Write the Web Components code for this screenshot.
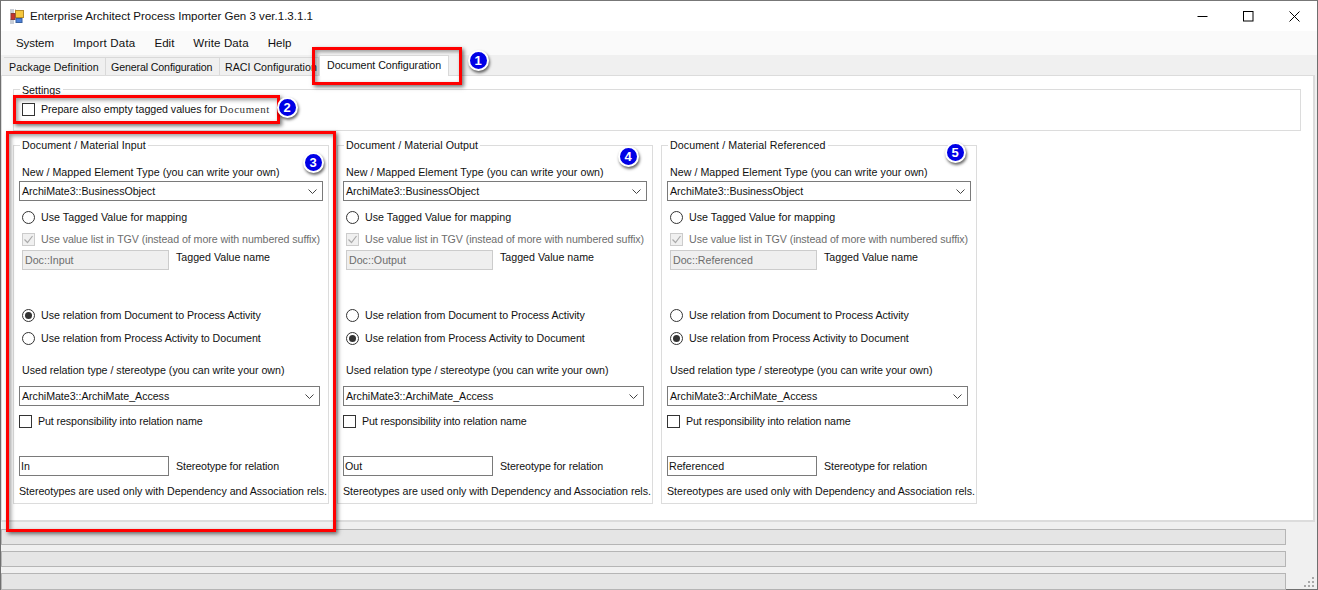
<!DOCTYPE html>
<html><head><meta charset="utf-8"><style>
html,body{margin:0;padding:0;width:1318px;height:590px;overflow:hidden;background:#f0f0f0}
body{font:10.67px/13px "Liberation Sans",Arial,sans-serif;color:#111}
</style></head><body>
<ea-app>
 <ea-titlebar slot="title">Enterprise Architect Process Importer Gen 3 ver.1.3.1.1</ea-titlebar>
 <ea-menubar slot="menu"></ea-menubar>
 <ea-tabs slot="tabs"></ea-tabs>
 <ea-settings slot="panel"></ea-settings>
 <ea-group slot="groups" heading="Document / Material Input" tgv="Doc::Input" dir="a" stereo="In" style="margin-left:11px"></ea-group>
 <ea-group slot="groups" heading="Document / Material Output" tgv="Doc::Output" dir="b" stereo="Out" style="margin-left:8px"></ea-group>
 <ea-group slot="groups" heading="Document / Material Referenced" tgv="Doc::Referenced" dir="b" stereo="Referenced" style="margin-left:8px"></ea-group>
 <ea-progress slot="status"></ea-progress>
 <ea-mark slot="over" x="312" y="47" w="150" h="38"></ea-mark>
 <ea-mark slot="over" x="13" y="95" w="267" h="29"></ea-mark>
 <ea-mark slot="over" x="6" y="131" w="330" h="401"></ea-mark>
 <ea-badge slot="over" x="478" y="60">1</ea-badge>
 <ea-badge slot="over" x="287" y="107">2</ea-badge>
 <ea-badge slot="over" x="313" y="162">3</ea-badge>
 <ea-badge slot="over" x="628" y="156">4</ea-badge>
 <ea-badge slot="over" x="955" y="152">5</ea-badge>
</ea-app>
<script>
function def(name,css,html,init){
  customElements.define(name,class extends HTMLElement{
    constructor(){super();this.attachShadow({mode:'open'});}
    connectedCallback(){
      const a=n=>this.getAttribute(n)||'';
      this.shadowRoot.innerHTML='<style>'+css+'</style>'+(typeof html==='function'?html(a):html);
      if(init)init(this,a);
    }
  });
}
def('ea-app',`
:host{display:flex;flex-direction:column;width:1318px;height:590px;box-sizing:border-box;border:1px solid #6f6f6f;border-top-color:#777;position:relative;background:#f0f0f0}
.panel{flex:none;height:447px;margin:0 2px 0 0;background:#fff;border:1px solid #dcdcdc;border-width:1px 2px 2px 1px;box-sizing:border-box;display:flex;flex-direction:column}
.row{display:flex;margin-top:14px}
`,`<slot name="title"></slot><slot name="menu"></slot><slot name="tabs"></slot>
<div class="panel"><slot name="panel"></slot><div class="row"><slot name="groups"></slot></div></div>
<slot name="status"></slot><slot name="over"></slot>`);
def('ea-titlebar',`
:host{display:flex;align-items:center;height:30px;background:#fff;font-size:11.55px;color:#111;flex:none}
svg{margin-left:9px;margin-right:6px;flex:none}
.t{flex:1;white-space:nowrap}
.c{display:flex;align-items:center}
.c svg{margin:0;display:block}
.c span{width:46px;height:30px;display:flex;align-items:center;justify-content:center}
`,`<svg width="14" height="15" viewBox="0 0 14 15"><path d="M0 0h4v4H0zM0 10h4v5H0z" fill="#c9ced6"/><path d="M5 0h1v1H5z" fill="#c9ced6"/><rect x="5.5" y="1.5" width="8" height="7" fill="#f6c83e" stroke="#b58a28"/><rect x="1" y="4.5" width="4" height="6" fill="#c8322c" stroke="#8c3a36"/><rect x="6" y="9.5" width="6" height="4" fill="#4d80d8" stroke="#38619f"/></svg>
<span class="t"><slot></slot></span>
<div class="c"><span><svg width="11" height="11" viewBox="0 0 11 11"><path d="M0.5 5.5h10" stroke="#000" fill="none"/></svg></span><span><svg width="11" height="11" viewBox="0 0 11 11"><rect x=".5" y=".5" width="9.5" height="9.5" stroke="#000" fill="none"/></svg></span><span><svg width="11" height="11" viewBox="0 0 11 11"><path d="M.5.5l10 10M10.5.5l-10 10" stroke="#000" fill="none"/></svg></span></div>`);
def('ea-menubar',`
:host{display:flex;height:24px;background:#fafafa;flex:none;padding-left:8px;font-size:11.55px;align-items:center;color:#111}
span{padding:0 7px;margin-right:5px}
`,`<span style="letter-spacing:-.1px">System</span><span style="letter-spacing:.2px">Import Data</span><span>Edit</span><span style="letter-spacing:.1px">Write Data</span><span>Help</span>`);
def('ea-tabs',`
:host{display:flex;height:20px;flex:none;padding-left:3px;align-items:flex-end;position:relative;background:#f0f0f0;color:#111}
.t{height:18px;line-height:18px;padding:0 5px;border:1px solid #d9d9d9;border-bottom:0;border-left:0;box-sizing:border-box;background:#f0f0f0;white-space:nowrap;flex:none;overflow:hidden}
.s{background:#fff;height:21px;line-height:19px;margin-bottom:-1px;padding:0 7px;width:130px;border:1px solid #d9d9d9;border-bottom:0;position:relative;z-index:1}
`,`<div class="t" style="width:102px;letter-spacing:.05px">Package Definition</div><div class="t" style="width:114px;letter-spacing:-.14px">General Configuration</div><div class="t" style="width:99px">RACI Configuration</div><div class="t s" style="letter-spacing:-.04px">Document Configuration</div>`);
def('ea-settings',`
:host{display:block;margin:13px 13px 0 11px;height:42px;box-sizing:border-box;border:1px solid #dcdcdc;width:1288px}
.l{margin:-6px 0 0 6px;background:#fff;padding:0 2px;width:max-content;height:13px}
.r{display:flex;align-items:center;margin:4px 0 0 8px;height:16px}
.k{width:13px;height:13px;box-sizing:border-box;border:1px solid #333;background:#fff;margin-right:6px;flex:none}
.d{font-family:"Liberation Serif","Times New Roman",serif;font-size:11px;letter-spacing:.55px;color:#333}
`,`<div class="l">Settings</div><div class="r"><span class="k"></span><span style="letter-spacing:-.04px">Prepare also empty tagged values for&nbsp;<span class="d">Document</span></span></div>`);
const chev='<svg width="9" height="5" viewBox="0 0 9 5"><path d="M.5.5l4 4 4-4" fill="none" stroke="#444"/></svg>';
def('ea-group',`
:host{display:block;width:316px;height:359px;box-sizing:border-box;border:1px solid #dcdcdc;flex:none;background:#fff;color:#111;white-space:nowrap}
.l{margin:-7px 0 0 6px;background:#fff;padding:0 2px;width:max-content;height:13px;letter-spacing:.07px}
.line{display:flex;align-items:center;height:16px}
.combo{display:flex;align-items:center;justify-content:space-between;box-sizing:border-box;border:1px solid #7a7a7a;background:#fff;padding:0 5px 0 2px;margin-left:5px;letter-spacing:-.03px}
.radio{width:13px;height:13px;box-sizing:border-box;border:1px solid #333;border-radius:50%;background:#fff;flex:none;margin-right:6px;display:flex;align-items:center;justify-content:center}
.radio.on::after{content:"";width:7px;height:7px;border-radius:50%;background:#333}
.k{width:13px;height:13px;box-sizing:border-box;border:1px solid #333;background:#fff;flex:none;margin-right:6px;display:flex}
.k.dis{border-color:#ccc;background:#f0f0f0}
.p8{padding-left:8px}.p5{padding-left:5px}
.gray{color:#6d6d6d}
.in{box-sizing:border-box;border:1px solid #7a7a7a;background:#fff;padding:0 1px;display:flex;align-items:center;flex:none}
.in.dis{background:#efefef;border-color:#ccc;color:#6d6d6d;padding:0 2px}
`,a=>`<div class="l">${a('heading')}</div>
<div class="line p8" style="margin-top:12px;letter-spacing:.04px">New / Mapped Element Type (you can write your own)</div>
<div class="combo" style="margin-top:1px;width:304px;height:20px">ArchiMate3::BusinessObject ${chev}</div>
<div class="line p8" style="margin-top:8px;letter-spacing:.03px"><span class="radio"></span>Use Tagged Value for mapping</div>
<div class="line p8 gray" style="margin-top:6px;letter-spacing:-.07px"><span class="k dis"><svg width="11" height="11" viewBox="0 0 11 11"><path d="M1.5 5.5l3 3 5-6.5" fill="none" stroke="#aaa" stroke-width="1.2"/></svg></span>Use value list in TGV (instead of more with numbered suffix)</div>
<div class="line p8" style="margin-top:3px;height:20px;align-items:flex-start"><span class="in dis" style="width:147px;height:20px">${a('tgv')}</span><span style="margin-left:7px;margin-top:1px">Tagged Value name</span></div>
<div class="line p8" style="margin-top:37px;letter-spacing:-.05px"><span class="radio ${a('dir')=='a'?'on':''}"></span>Use relation from Document to Process Activity</div>
<div class="line p8" style="margin-top:7px;letter-spacing:-.05px"><span class="radio ${a('dir')=='b'?'on':''}"></span>Use relation from Process Activity to Document</div>
<div class="line p8" style="margin-top:16px;letter-spacing:-.02px">Used relation type / stereotype (you can write your own)</div>
<div class="combo" style="margin-top:8px;width:301px;height:20px">ArchiMate3::ArchiMate_Access ${chev}</div>
<div class="line p5" style="margin-top:7px;letter-spacing:-.1px"><span class="k"></span>Put responsibility into relation name</div>
<div class="line p5" style="margin-top:27px;height:20px"><span class="in" style="width:150px;height:20px">${a('stereo')}</span><span style="margin-left:7px;letter-spacing:-.08px">Stereotype for relation</span></div>
<div class="line p5" style="margin-top:7px;letter-spacing:-.02px">Stereotypes are used only with Dependency and Association rels.</div>`);
def('ea-progress',`
:host{display:flex;flex-direction:column;flex:1;position:relative;padding-top:7px;box-sizing:border-box}
.b{margin-left:0;width:1285px;height:16px;box-sizing:border-box;border:1px solid #b5b5b5;background:#e5e5e5;margin-bottom:6px}
.b:last-of-type{margin-bottom:0;height:17px}
svg{position:absolute;right:2px;bottom:1px}
`,`<div class="b"></div><div class="b"></div><div class="b"></div>
<svg width="12" height="12" viewBox="0 0 12 12" fill="#a8a8a8"><rect x="9" y="0" width="2" height="2"/><rect x="5" y="4" width="2" height="2"/><rect x="9" y="4" width="2" height="2"/><rect x="1" y="8" width="2" height="2"/><rect x="5" y="8" width="2" height="2"/><rect x="9" y="8" width="2" height="2"/></svg>`);
def('ea-mark',`
:host{display:block;position:absolute;box-sizing:border-box;border:3px solid #f00;box-shadow:2px 2px 4px rgba(0,0,0,.55),inset 2px 2px 4px rgba(0,0,0,.4);pointer-events:none}
`,'',(e,a)=>{e.style.left=(a('x')-1)+'px';e.style.top=(a('y')-1)+'px';e.style.width=a('w')+'px';e.style.height=a('h')+'px';});
def('ea-badge',`
:host{display:flex;position:absolute;width:21px;height:21px;box-sizing:border-box;border:2px solid #fff;border-radius:50%;background:#0000e6;color:#fff;font:bold 13px/17px "Liberation Sans",sans-serif;align-items:center;justify-content:center;box-shadow:1px 2px 3px rgba(0,0,0,.6)}
`,'<slot></slot>',(e,a)=>{e.style.left=(a('x')-11.5)+'px';e.style.top=(a('y')-11.5)+'px';});
</script>
</body></html>
